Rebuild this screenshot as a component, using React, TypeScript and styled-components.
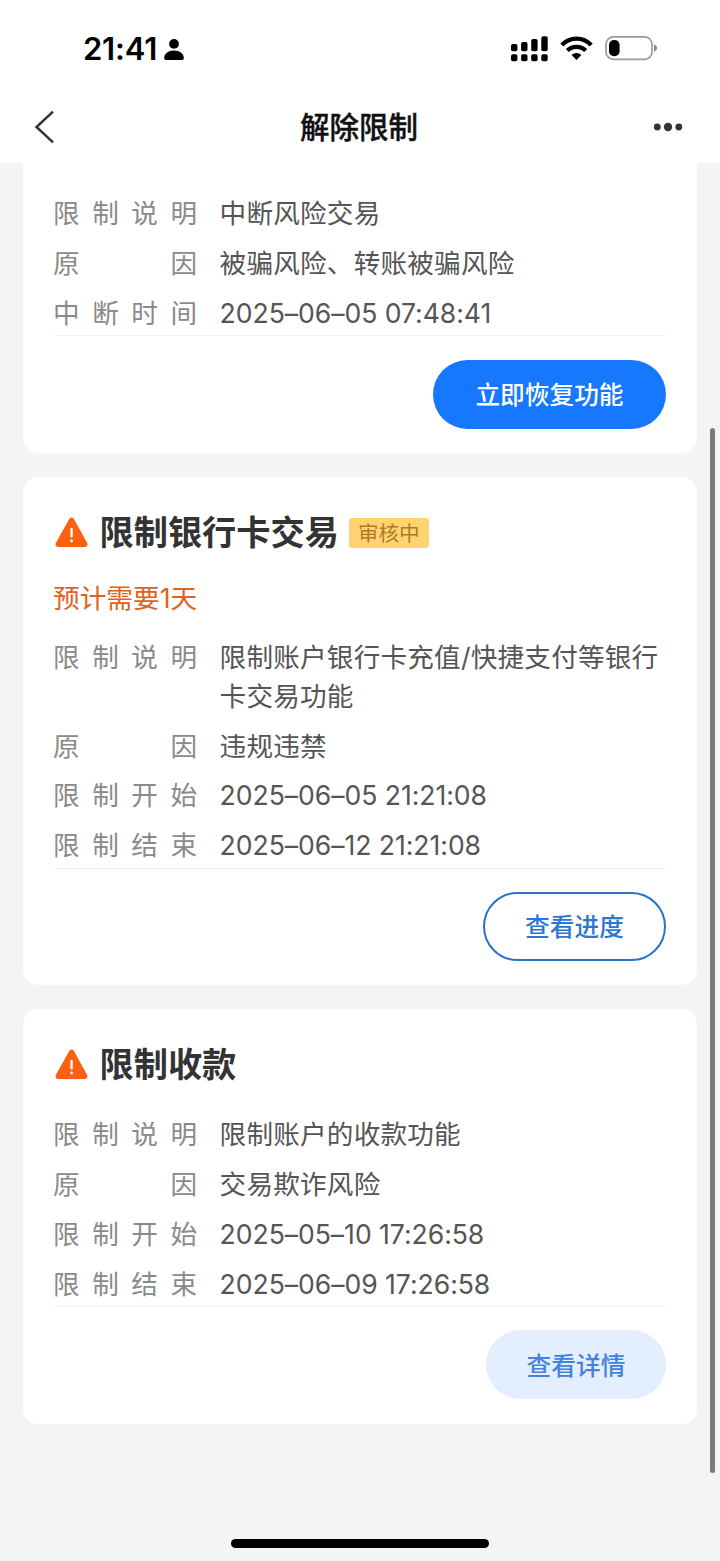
import React from 'react';
import styled, { createGlobalStyle } from 'styled-components';

const GlobalStyle = createGlobalStyle`
  * { box-sizing: border-box; }
  body {
    margin: 0;
    background: #f4f4f4;
    font-family: Inter, "Noto Sans CJK SC", sans-serif;
    -webkit-font-smoothing: antialiased;
  }
`;

const Screen = styled.div`
  position: relative;
  display: flex;
  flex-direction: column;
  width: 720px;
  height: 1561px;
  overflow: hidden;
  background: #f4f4f4;
`;

const Header = styled.header`
  height: 163px;
  flex: none;
  background: #fff;
`;

const StatusBar = styled.div`
  display: flex;
  justify-content: space-between;
  align-items: center;
  height: 97px;
  padding: 0 62px 0 83px;
`;

const Clock = styled.div`
  display: flex;
  align-items: center;
  gap: 7px;
  font-size: 31px;
  font-weight: 600;
  line-height: 40px;
  letter-spacing: -0.2px;
  color: #000;
`;

const StatusIcons = styled.div`
  display: flex;
  align-items: center;
  gap: 12px;
`;

const NavBar = styled.nav`
  display: grid;
  grid-template-columns: 60px 1fr 60px;
  align-items: center;
  height: 60px;
  padding: 0 37px 0 34px;
`;

const NavTitle = styled.h1`
  margin: 0 0 0 1px;
  text-align: center;
  font-size: 29.5px;
  font-weight: 500;
  line-height: 40px;
  color: #111;
  -webkit-text-stroke: 0.4px #111;
`;

const NavAction = styled.div<{ $end?: boolean }>`
  display: flex;
  justify-content: ${(p) => (p.$end ? 'flex-end' : 'flex-start')};
`;

const List = styled.main`
  display: flex;
  flex-direction: column;
  gap: 23.5px;
  padding: 0 23px;
`;

const Card = styled.section<{ $continued?: boolean }>`
  display: flex;
  flex-direction: column;
  padding: ${(p) => (p.$continued ? '31.4px' : '34.4px')} 31px 24.4px 30px;
  background: #fff;
  border-radius: ${(p) => (p.$continued ? '0 0 15px 15px' : '15px')};
`;

const CardHead = styled.div`
  display: flex;
  align-items: center;
  height: 44px;
  padding-left: 2px;
  margin-bottom: 28px;
`;

const CardTitle = styled.h2`
  margin: 0 0 0 11.5px;
  font-size: 34.2px;
  font-weight: 700;
  line-height: 44px;
  color: #333;
`;

const Tag = styled.span`
  margin-left: 10px;
  margin-top: 1px;
  width: 80px;
  height: 30px;
  border-radius: 3px;
  background: #ffd470;
  color: #b07a28;
  font-size: 20.6px;
  line-height: 31px;
  text-align: center;
`;

const Estimate = styled.p`
  margin: -4px 0 21.4px;
  font-size: 26.7px;
  line-height: 38px;
  color: #e0621c;
`;

const Rows = styled.dl`
  display: flex;
  flex-direction: column;
  gap: 11.4px;
  margin: 0 0 0 1px;
  padding-bottom: 3px;
  border-bottom: 1px solid #f3f3f3;
`;

const Row = styled.div`
  display: flex;
  margin-left: -1px;
  font-size: 26.6px;
  line-height: 38.4px;
`;

const Label = styled.dt`
  width: 144px;
  flex: none;
  text-align: justify;
  text-align-last: justify;
  color: #8a8a8a;
`;

const Value = styled.dd<{ $numeric?: boolean }>`
  flex: 1;
  margin: 0 -10px 0 22.6px;
  color: #555;
  white-space: pre-line;
  letter-spacing: ${(p) => (p.$numeric ? '-0.05px' : '0.22px')};
`;

const variants = {
  primary: 'width: 233px; background: #1677ff; color: #fff;',
  outline: 'width: 183px; border: 2px solid #2474c8; background: #fff; color: #2d76d6;',
  soft: 'width: 180px; background: #e3eeff; color: #4482dc;',
};

const Button = styled.button<{ $variant: keyof typeof variants }>`
  display: flex;
  align-items: center;
  justify-content: center;
  align-self: flex-end;
  height: 69px;
  margin-top: 23.3px;
  padding: 0 0 2px;
  border: 0;
  border-radius: 35px;
  font-family: inherit;
  font-size: 24.7px;
  font-weight: 500;
  ${(p) => variants[p.$variant]}
`;

const ScrollThumb = styled.div`
  position: absolute;
  top: 428px;
  right: 5px;
  width: 5px;
  height: 1045px;
  border-radius: 3px;
  background: #7a7a7a;
`;

const HomeIndicator = styled.div`
  position: absolute;
  left: 231px;
  bottom: 13px;
  width: 258px;
  height: 9px;
  border-radius: 5px;
  background: #000;
`;

const PersonIcon = () => (
  <svg width="20" height="24" viewBox="0 -2 20 24">
    <circle cx="10" cy="4.9" r="4.9" />
    <path d="M0.2 19C0.2 14.6 4.2 11.4 10 11.4s9.8 3.2 9.8 7.6c0 1.3-.6 2-1.8 2H2c-1.2 0-1.8-.7-1.8-2z" />
  </svg>
);

const SignalIcon = () => (
  <svg width="37" height="26" viewBox="0 0 37 26">
    {[8, 6, 3, 0.3].map((y, i) => (
      <g key={y}>
        <rect x={i * 10.1} y={y} width="6.4" height={15.3 - y} rx="1.8" />
        <rect x={i * 10.1} y="18.3" width="6.4" height="7" rx="1.8" />
      </g>
    ))}
  </svg>
);

const WifiIcon = () => (
  <svg width="33" height="26" viewBox="0 0 33 26">
    <g fill="none" stroke="#000" strokeWidth="4.3">
      <path d="M1.8 8.9C10 .4 23 .4 31.2 8.9" />
      <path d="M7.3 14.6C12.4 9.5 20.6 9.5 25.7 14.6" />
    </g>
    <path d="M11.6 19c2.8-2.7 7-2.7 9.8 0l-4.9 4.9z" />
  </svg>
);

const BatteryIcon = () => (
  <svg width="53" height="28" viewBox="0 0 53 28">
    <rect x="1" y="1.8" width="46" height="22.6" rx="7.5" fill="#fff" stroke="#999" strokeWidth="1.7" />
    <rect x="4" y="5" width="10.6" height="16.3" rx="5" />
    <path d="M49 9.5c1.8.4 3 1.8 3 3.6s-1.2 3.2-3 3.6z" fill="#888" />
  </svg>
);

const BackIcon = () => (
  <svg width="22" height="34" viewBox="0 0 22 34" fill="none" stroke="#333" strokeWidth="2.5">
    <path d="M19 1.6L2.5 17L19 32.3" />
  </svg>
);

const MoreIcon = () => (
  <svg width="30" height="10" viewBox="0 0 30 10" fill="#333">
    <circle cx="4.3" cy="5" r="3.4" />
    <circle cx="15" cy="5" r="4.2" />
    <circle cx="25.8" cy="5" r="3.4" />
  </svg>
);

const WarningIcon = () => (
  <svg width="33" height="32" viewBox="0 0 33 32">
    <path d="M14.4 1.8Q16.6 -.6 18.8 1.8L32.2 26Q33.4 29.6 29.8 30H3.2Q-.4 29.6 .8 26z" fill="#fc6011" />
    <path d="M16.6 11.8v7.6" stroke="#fff" strokeWidth="2.3" strokeLinecap="round" />
    <circle cx="16.6" cy="24" r="1.4" fill="#fff" />
  </svg>
);

type Restriction = {
  title?: string;
  tag?: string;
  estimate?: string;
  rows: [string, string][];
  action: string;
  variant: keyof typeof variants;
};

const restrictions: Restriction[] = [
  {
    rows: [
      ['限制说明', '中断风险交易'],
      ['原因', '被骗风险、转账被骗风险'],
      ['中断时间', '2025–06–05 07:48:41'],
    ],
    action: '立即恢复功能',
    variant: 'primary',
  },
  {
    title: '限制银行卡交易',
    tag: '审核中',
    estimate: '预计需要1天',
    rows: [
      ['限制说明', '限制账户银行卡充值/快捷支付等银行\n卡交易功能'],
      ['原因', '违规违禁'],
      ['限制开始', '2025–06–05 21:21:08'],
      ['限制结束', '2025–06–12 21:21:08'],
    ],
    action: '查看进度',
    variant: 'outline',
  },
  {
    title: '限制收款',
    rows: [
      ['限制说明', '限制账户的收款功能'],
      ['原因', '交易欺诈风险'],
      ['限制开始', '2025–05–10 17:26:58'],
      ['限制结束', '2025–06–09 17:26:58'],
    ],
    action: '查看详情',
    variant: 'soft',
  },
];

export default function App() {
  return (
    <Screen>
      <GlobalStyle />
      <Header>
        <StatusBar>
          <Clock>
            21:41
            <PersonIcon />
          </Clock>
          <StatusIcons>
            <SignalIcon />
            <WifiIcon />
            <BatteryIcon />
          </StatusIcons>
        </StatusBar>
        <NavBar>
          <NavAction><BackIcon /></NavAction>
          <NavTitle>解除限制</NavTitle>
          <NavAction $end><MoreIcon /></NavAction>
        </NavBar>
      </Header>
      <List>
        {restrictions.map((r) => (
          <Card key={r.action} $continued={!r.title}>
            {r.title && (
              <CardHead>
                <WarningIcon />
                <CardTitle>{r.title}</CardTitle>
                {r.tag && <Tag>{r.tag}</Tag>}
              </CardHead>
            )}
            {r.estimate && <Estimate>{r.estimate}</Estimate>}
            <Rows>
              {r.rows.map(([label, value]) => (
                <Row key={label}>
                  <Label>{label}</Label>
                  <Value $numeric={value.startsWith('20')}>{value}</Value>
                </Row>
              ))}
            </Rows>
            <Button $variant={r.variant}>{r.action}</Button>
          </Card>
        ))}
      </List>
      <ScrollThumb />
      <HomeIndicator />
    </Screen>
  );
}
